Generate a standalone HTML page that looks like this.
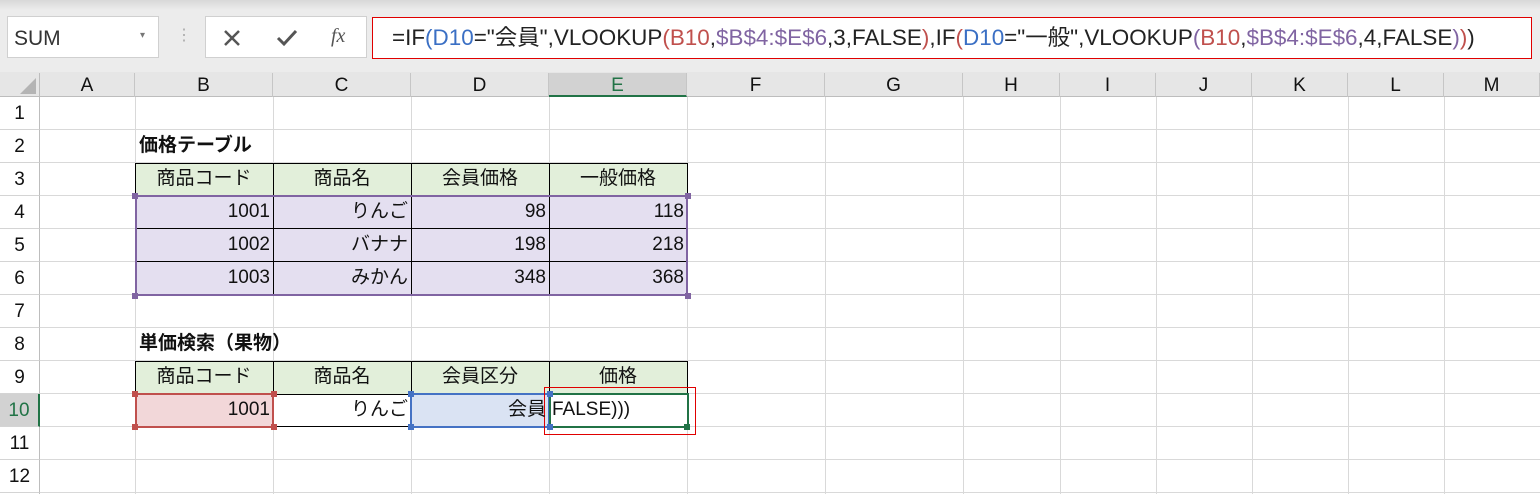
<!DOCTYPE html>
<html><head><meta charset="utf-8"><style>
*{margin:0;padding:0;box-sizing:border-box}
body{width:1540px;height:494px;overflow:hidden;background:#fff;font-family:"Liberation Sans","Noto Sans CJK JP",sans-serif;position:relative}
.a{position:absolute}
.t{position:absolute;font-size:18px;line-height:33px;white-space:nowrap;color:#111}
.ch{position:absolute;top:73px;height:24px;font-size:19px;line-height:26px;text-align:center;border-right:1px solid #c6c6c6;color:#111}
.rh{position:absolute;left:0;width:40px;height:33px;font-size:19px;line-height:33px;text-align:center;border-bottom:1px solid #d4d4d4;color:#111;background:#fff;border-right:1px solid #bdbdbd}
.vl{position:absolute;top:97px;height:397px;width:1px;background:#d9d9d9}
.hl{position:absolute;left:40px;width:1500px;height:1px;background:#d9d9d9}
.c{position:absolute;font-size:19px;line-height:32px;white-space:nowrap;padding:0 3px;color:#111}
.h{position:absolute;width:6px;height:6px}
</style></head><body>
<div class="a" style="left:0;top:0;width:1540px;height:73px;background:linear-gradient(#d8d8d8 0,#ececec 10px,#ececec 100%)"></div>
<div class="a" style="left:7px;top:16px;width:152px;height:42px;background:#fff;border:1px solid #d0d0d0"></div>
<div class="t" style="left:14px;top:22px;font-size:21px;color:#333">SUM</div>
<div class="t" style="left:140px;top:19px;font-size:10px;color:#777">▾</div>
<div class="t" style="left:176px;top:19px;font-size:16px;color:#aaa">⋮</div>
<div class="a" style="left:205px;top:16px;width:162px;height:42px;background:#fff;border:1px solid #d0d0d0"></div>
<svg class="a" style="left:222px;top:28px" width="20" height="20"><path d="M3 3L17 17M17 3L3 17" stroke="#555" stroke-width="2.5"/></svg>
<svg class="a" style="left:275px;top:28px" width="24" height="20"><path d="M3 10L9 16L21 3" stroke="#555" stroke-width="3" fill="none"/></svg>
<div class="t" style="left:331px;top:20px;font-family:'Liberation Serif',serif;font-style:italic;font-size:20px;color:#555">fx</div>
<div class="a" style="left:372px;top:17px;width:1160px;height:42px;background:#fff;border:1px solid #e00000"></div>
<div class="t" style="left:392px;top:21px;font-size:22px;color:#222;transform:scaleX(1.02);transform-origin:0 0">=IF<span style="color:#3a6fc4">(D10</span>="会員",VLOOKUP<span style="color:#c0504d">(B10</span>,<span style="color:#8064a2">$B$4:$E$6</span>,3,FALSE<span style="color:#c0504d">)</span>,IF<span style="color:#c0504d">(</span><span style="color:#3a6fc4">D10</span>="一般",VLOOKUP<span style="color:#8064a2">(</span><span style="color:#c0504d">B10</span>,<span style="color:#8064a2">$B$4:$E$6</span>,4,FALSE<span style="color:#8064a2">)</span><span style="color:#c0504d">)</span>)</div>
<div class="a" style="left:0;top:72px;width:1540px;height:25px;background:#e6e6e6;border-bottom:1px solid #bdbdbd"></div>
<svg class="a" style="left:18px;top:78px" width="20" height="18"><path d="M18 0L18 16L2 16Z" fill="#b4b4b4"/></svg>
<div class="a" style="left:39px;top:73px;width:1px;height:421px;background:#bdbdbd"></div>
<div class="ch" style="left:40px;width:95px">A</div>
<div class="ch" style="left:135px;width:138px">B</div>
<div class="ch" style="left:273px;width:138px">C</div>
<div class="ch" style="left:411px;width:138px">D</div>
<div class="ch" style="left:549px;width:138px;background:#d2d2d2;border-bottom:2px solid #217346;color:#217346">E</div>
<div class="ch" style="left:687px;width:138px">F</div>
<div class="ch" style="left:825px;width:138px">G</div>
<div class="ch" style="left:963px;width:97px">H</div>
<div class="ch" style="left:1060px;width:96px">I</div>
<div class="ch" style="left:1156px;width:96px">J</div>
<div class="ch" style="left:1252px;width:96px">K</div>
<div class="ch" style="left:1348px;width:96px">L</div>
<div class="ch" style="left:1444px;width:96px">M</div>
<div class="vl" style="left:135px"></div><div class="vl" style="left:273px"></div><div class="vl" style="left:411px"></div><div class="vl" style="left:549px"></div><div class="vl" style="left:687px"></div><div class="vl" style="left:825px"></div><div class="vl" style="left:963px"></div><div class="vl" style="left:1060px"></div><div class="vl" style="left:1156px"></div><div class="vl" style="left:1252px"></div><div class="vl" style="left:1348px"></div><div class="vl" style="left:1444px"></div>
<div class="hl" style="top:129px"></div><div class="hl" style="top:162px"></div><div class="hl" style="top:195px"></div><div class="hl" style="top:228px"></div><div class="hl" style="top:261px"></div><div class="hl" style="top:294px"></div><div class="hl" style="top:327px"></div><div class="hl" style="top:360px"></div><div class="hl" style="top:393px"></div><div class="hl" style="top:426px"></div><div class="hl" style="top:459px"></div><div class="hl" style="top:492px"></div>
<div class="rh" style="top:97px">1</div><div class="rh" style="top:130px">2</div><div class="rh" style="top:163px">3</div><div class="rh" style="top:196px">4</div><div class="rh" style="top:229px">5</div><div class="rh" style="top:262px">6</div><div class="rh" style="top:295px">7</div><div class="rh" style="top:328px">8</div><div class="rh" style="top:361px">9</div>
<div class="rh" style="top:394px;background:#d2d2d2;color:#217346;border-right:2px solid #217346">10</div>
<div class="rh" style="top:427px">11</div><div class="rh" style="top:460px">12</div>
<div class="c" style="left:136px;top:130px;font-weight:bold">価格テーブル</div>
<div class="c" style="left:136px;top:328px;font-weight:bold">単価検索（果物）</div>
<div class="a" style="left:135px;top:163px;width:553px;height:33px;background:#e2efda;border:1px solid #000"></div>
<div class="a" style="left:135px;top:196px;width:553px;height:99px;background:#e4dff0"></div>
<div class="a" style="left:273px;top:163px;width:1px;height:132px;background:#000"></div>
<div class="a" style="left:411px;top:163px;width:1px;height:132px;background:#000"></div>
<div class="a" style="left:549px;top:163px;width:1px;height:132px;background:#000"></div>
<div class="a" style="left:135px;top:228px;width:553px;height:1px;background:#000"></div>
<div class="a" style="left:135px;top:261px;width:553px;height:1px;background:#000"></div>
<div class="a" style="left:135px;top:195px;width:553px;height:101px;border:2px solid #8064a2"></div>
<div class="h" style="left:132px;top:193px;background:#8064a2"></div><div class="h" style="left:685px;top:193px;background:#8064a2"></div><div class="h" style="left:132px;top:293px;background:#8064a2"></div><div class="h" style="left:685px;top:293px;background:#8064a2"></div>
<div class="c" style="left:135px;top:163px;width:138px;text-align:center">商品コード</div>
<div class="c" style="left:273px;top:163px;width:138px;text-align:center">商品名</div>
<div class="c" style="left:411px;top:163px;width:138px;text-align:center">会員価格</div>
<div class="c" style="left:549px;top:163px;width:138px;text-align:center">一般価格</div>
<div class="c" style="left:135px;top:196px;width:138px;text-align:right">1001</div>
<div class="c" style="left:273px;top:196px;width:138px;text-align:right">りんご</div>
<div class="c" style="left:411px;top:196px;width:138px;text-align:right">98</div>
<div class="c" style="left:549px;top:196px;width:138px;text-align:right">118</div>
<div class="c" style="left:135px;top:229px;width:138px;text-align:right">1002</div>
<div class="c" style="left:273px;top:229px;width:138px;text-align:right">バナナ</div>
<div class="c" style="left:411px;top:229px;width:138px;text-align:right">198</div>
<div class="c" style="left:549px;top:229px;width:138px;text-align:right">218</div>
<div class="c" style="left:135px;top:262px;width:138px;text-align:right">1003</div>
<div class="c" style="left:273px;top:262px;width:138px;text-align:right">みかん</div>
<div class="c" style="left:411px;top:262px;width:138px;text-align:right">348</div>
<div class="c" style="left:549px;top:262px;width:138px;text-align:right">368</div>
<div class="a" style="left:135px;top:361px;width:553px;height:34px;background:#e2efda;border:1px solid #000"></div>
<div class="a" style="left:273px;top:361px;width:1px;height:66px;background:#000"></div>
<div class="a" style="left:411px;top:361px;width:1px;height:66px;background:#000"></div>
<div class="a" style="left:549px;top:361px;width:1px;height:33px;background:#000"></div>
<div class="a" style="left:135px;top:426px;width:553px;height:1px;background:#000"></div>
<div class="a" style="left:135px;top:393px;width:139px;height:35px;background:#f2d7d9;border:2px solid #c0504d"></div>
<div class="h" style="left:132px;top:391px;background:#c0504d"></div><div class="h" style="left:271px;top:391px;background:#c0504d"></div><div class="h" style="left:132px;top:424px;background:#c0504d"></div><div class="h" style="left:271px;top:424px;background:#c0504d"></div>
<div class="a" style="left:410px;top:393px;width:140px;height:35px;background:#dae3f3;border:2px solid #4472c4"></div>
<div class="h" style="left:408px;top:391px;background:#4472c4"></div><div class="h" style="left:547px;top:391px;background:#4472c4"></div><div class="h" style="left:408px;top:424px;background:#4472c4"></div><div class="h" style="left:547px;top:424px;background:#4472c4"></div>
<div class="a" style="left:549px;top:393px;width:140px;height:35px;border:2px solid #217346;background:#fff"></div>
<div class="h" style="left:547px;top:391px;background:#4472c4"></div><div class="h" style="left:547px;top:424px;background:#4472c4"></div>
<div class="h" style="left:684px;top:424px;background:#217346"></div>
<div class="a" style="left:544px;top:387px;width:152px;height:48px;border:1px solid #e00000"></div>
<div class="c" style="left:135px;top:361px;width:138px;text-align:center">商品コード</div>
<div class="c" style="left:273px;top:361px;width:138px;text-align:center">商品名</div>
<div class="c" style="left:411px;top:361px;width:138px;text-align:center">会員区分</div>
<div class="c" style="left:549px;top:361px;width:138px;text-align:center">価格</div>
<div class="c" style="left:135px;top:394px;width:138px;text-align:right">1001</div>
<div class="c" style="left:273px;top:394px;width:138px;text-align:right">りんご</div>
<div class="c" style="left:411px;top:394px;width:138px;text-align:right">会員</div>
<div class="c" style="left:549px;top:394px;width:138px;text-align:left;padding-left:3px">FALSE)))</div>
</body></html>
